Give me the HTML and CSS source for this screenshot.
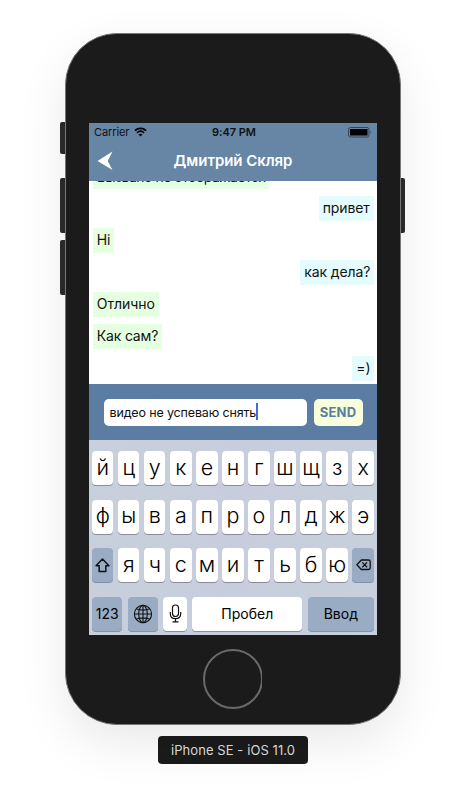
FILE: index.html
```html
<!DOCTYPE html>
<html lang="ru">
<head>
<meta charset="utf-8">
<title>iPhone SE - iOS 11.0</title>
<link rel="stylesheet" href="styles.css">
</head>
<body>
<div class="phone">
  <i class="side mute"></i><i class="side vol-up"></i><i class="side vol-down"></i><i class="side power"></i>
  <main class="screen">
    <header class="header">
      <div class="status">
        <span class="carrier">Carrier</span>
        <svg class="wifi" viewBox="0 0 13 10"><path d="M.9 3.6C4.1.6 8.9.6 12.1 3.6M2.9 5.8c2.1-1.9 5.1-1.9 7.2 0" fill="none" stroke="#000" stroke-width="1.7"/><path d="M4.5 7.4c1.2-1 2.8-1 4 0l-2 2.1z"/></svg>
        <span class="clock">9:47 PM</span>
        <svg class="battery" viewBox="0 0 24 11"><rect x=".5" y=".5" width="20.5" height="9.5" rx="2" fill="none" stroke="#324458"/><rect x="2" y="2" width="17.5" height="6.5" rx=".5"/><path d="M22.3 3.7q1.6 1.5 0 3z" fill="#324458"/></svg>
      </div>
      <div class="title">
        <svg class="back" viewBox="0 0 16 20"><path d="M.5 10 15.5.5 10.7 10l4.8 9z" fill="#fff"/></svg>
        <h1>Дмитрий Скляр</h1>
      </div>
    </header>
    <section class="chat">
      <p class="in m-top">Вызвано не отображается</p>
      <p class="out m-hello">привет</p>
      <p class="in m-hi">Hi</p>
      <p class="out m-how">как дела?</p>
      <p class="in m-fine">Отлично</p>
      <p class="in m-you">Как сам?</p>
      <p class="out m-smile">=)</p>
    </section>
    <div class="composer">
      <div class="field"><span>видео не успеваю снять</span><i class="caret"></i></div>
      <button class="send">SEND</button>
    </div>
    <div class="keyboard">
      <div class="row"><b>й</b><b>ц</b><b>у</b><b>к</b><b>е</b><b>н</b><b>г</b><b>ш</b><b>щ</b><b>з</b><b>х</b></div>
      <div class="row"><b>ф</b><b>ы</b><b>в</b><b>а</b><b>п</b><b>р</b><b>о</b><b>л</b><b>д</b><b>ж</b><b>э</b></div>
      <div class="row">
        <b class="dark"><svg width="15" height="15" viewBox="0 0 14 14"><path d="M7 1 13 7.3h-2.9v5.2H3.9V7.3H1z" fill="none" stroke="#111" stroke-width="1.4" stroke-linejoin="round"/></svg></b>
        <b>я</b><b>ч</b><b>с</b><b>м</b><b>и</b><b>т</b><b>ь</b><b>б</b><b>ю</b>
        <b class="dark"><svg width="15" height="12" viewBox="0 0 15 12"><path d="M5.3 1h7.2q1.7 0 1.7 1.7v6.1q0 1.7-1.7 1.7H5.3L.9 5.8zM6.3 3.4l4.8 4.8m0-4.8L6.3 8.2" fill="none" stroke="#111" stroke-width="1.3" stroke-linejoin="round"/></svg></b>
      </div>
      <div class="row bottom">
        <b class="dark num">123</b>
        <b class="dark globe"><svg width="20" height="20" viewBox="0 0 20 20"><g fill="none" stroke="#111" stroke-width="1.1"><circle cx="10" cy="10" r="8.6"/><ellipse cx="10" cy="10" rx="4.3" ry="8.6"/><path d="M10 1.4v17.2M1.4 10h17.2M3.3 4.8q6.7 2.6 13.4 0M3.3 15.2q6.7-2.6 13.4 0"/></g></svg></b>
        <b class="mic"><svg width="13" height="19" viewBox="0 0 13 19"><path d="M6.5 1Q9.5 1 9.5 4v5.5q0 3-3 3t-3-3V4q0-3 3-3zM1.3 8v1.7q0 5 5.2 5t5.2-5V8M6.5 14.7v3M3.5 17.8h6" fill="none" stroke="#111" stroke-width="1.2"/></svg></b>
        <b class="space">Пробел</b>
        <b class="dark enter">Ввод</b>
      </div>
    </div>
  </main>
  <div class="home"><i></i></div>
</div>
<div class="label">iPhone SE - iOS 11.0</div>
</body>
</html>
```
FILE: styles.css
```css
* { box-sizing: border-box; }
body { margin: 0; height: 806px; padding-top: 33px; background: #fff; overflow: hidden; font-family: Inter, "Liberation Sans", sans-serif; display: flex; flex-direction: column; align-items: center; }
.phone { position: relative; width: 336px; height: 692px; padding: 89px 23px 0; border: 1px solid #777; border-radius: 52px; background: #1b1b1b; box-shadow: 0 18px 50px rgba(0,0,0,.09); display: flex; flex-direction: column; align-items: center; }
.side { position: absolute; z-index: -1; width: 8px; left: -6px; background: #2b2b2b; border-radius: 2px; }
.mute { top: 88px; height: 32px; }
.vol-up { top: 144px; height: 55px; }
.vol-down { top: 206px; height: 55px; }
.power { left: auto; right: -5px; top: 144px; height: 55px; }
.screen { width: 288px; height: 512px; flex: none; background: #fff; overflow: hidden; display: flex; flex-direction: column; }
.header { height: 58px; flex: none; background: #6785a5; }
.status { height: 18px; display: flex; align-items: center; padding: 0 5px; font-size: 11px; color: #111; }
.carrier { width: 35px; letter-spacing: -.1px; }
.wifi { width: 13px; height: 10px; margin-left: 5px; }
.clock { font-weight: 600; margin-left: 65px; width: 46px; white-space: nowrap; letter-spacing: -.05px; }
.battery { width: 24px; height: 11px; margin-left: auto; }
.title { height: 39px; display: flex; align-items: center; padding-left: 8px; }
.back { width: 16px; height: 20px; }
h1 { margin: 0; flex: 1; padding-right: 24px; text-align: center; font-size: 15px; letter-spacing: -.05px; font-weight: 600; color: #fff; }
.chat { height: 203px; flex: none; overflow: hidden; display: flex; flex-direction: column; justify-content: flex-end; gap: 7px; padding: 0 3.3px 3px 3.7px; }
.chat p { margin: 0; flex: none; height: 25px; padding: 0 4px; line-height: 24px; font-size: 14px; color: #111; white-space: nowrap; }
.in { align-self: flex-start; background: #e5ffe1; }
.out { align-self: flex-end; background: #e5fcff; }
.chat .m-top { width: 176.5px; line-height: 26px; letter-spacing: -.5px; }
.m-hello { width: 55px; letter-spacing: -.1px; }
.m-hi { width: 21px; }
.m-how { width: 73.5px; letter-spacing: -.1px; }
.m-fine { width: 66px; }
.m-you { width: 69px; letter-spacing: -.15px; }
.m-smile { width: 21.5px; }
.composer { height: 56px; flex: none; background: #5b7da3; display: flex; align-items: center; padding: 0 14px 0 14.5px; gap: 7px; }
.field { width: 203px; height: 27px; border-radius: 5px; background: #fff; padding-left: 6px; display: flex; align-items: center; font-size: 12.5px; letter-spacing: -.15px; color: #111; white-space: nowrap; }
.caret { width: 2px; height: 17px; margin-top: -1px; background: #4169e8; }
.send { width: 49px; height: 27px; border: 0; padding: 0; border-radius: 5px; background: #f8ffda; color: #5b7da3; font: 700 13px Inter, sans-serif; letter-spacing: .2px; }
.keyboard { flex: 1; background: linear-gradient(100deg, #c7d0dd, #c7cddc 50%, #c7d0dc); padding: 11px 3px 4px; display: flex; flex-direction: column; justify-content: space-between; }
.row { display: flex; justify-content: space-between; height: 34.2px; }
.row b { width: 21.4px; height: 34px; border-radius: 4px; background: #fff; box-shadow: 0 1px 0 #888d96; color: #000; font-weight: 350; font-size: 21.5px; line-height: 30px; padding-bottom: 3px; display: flex; align-items: center; justify-content: center; }
.row b.dark { background: #9aacc4; box-shadow: 0 1px 0 #8291a7; padding: 0; }
.row.bottom b { font-size: 14px; font-weight: 400; padding: 0; }
.row.bottom .num { width: 30.4px; }
.row.bottom .globe { width: 30.4px; }
.row.bottom .mic { width: 23.5px; }
.row.bottom .space { width: 110px; }
.row.bottom .enter { width: 66.3px; }
.home { width: 59px; height: 61px; margin: 14px 1px 0 0; overflow: hidden; flex: none; }
.home i { display: block; width: 60px; height: 60px; border: 2.5px solid #6a6868; border-radius: 50%; }
.label { margin-top: 11px; width: 150px; height: 28px; border-radius: 4px; background: #1b1b1b; color: #dedede; font-size: 13px; letter-spacing: .08px; line-height: 29px; text-align: center; white-space: nowrap; }
```
